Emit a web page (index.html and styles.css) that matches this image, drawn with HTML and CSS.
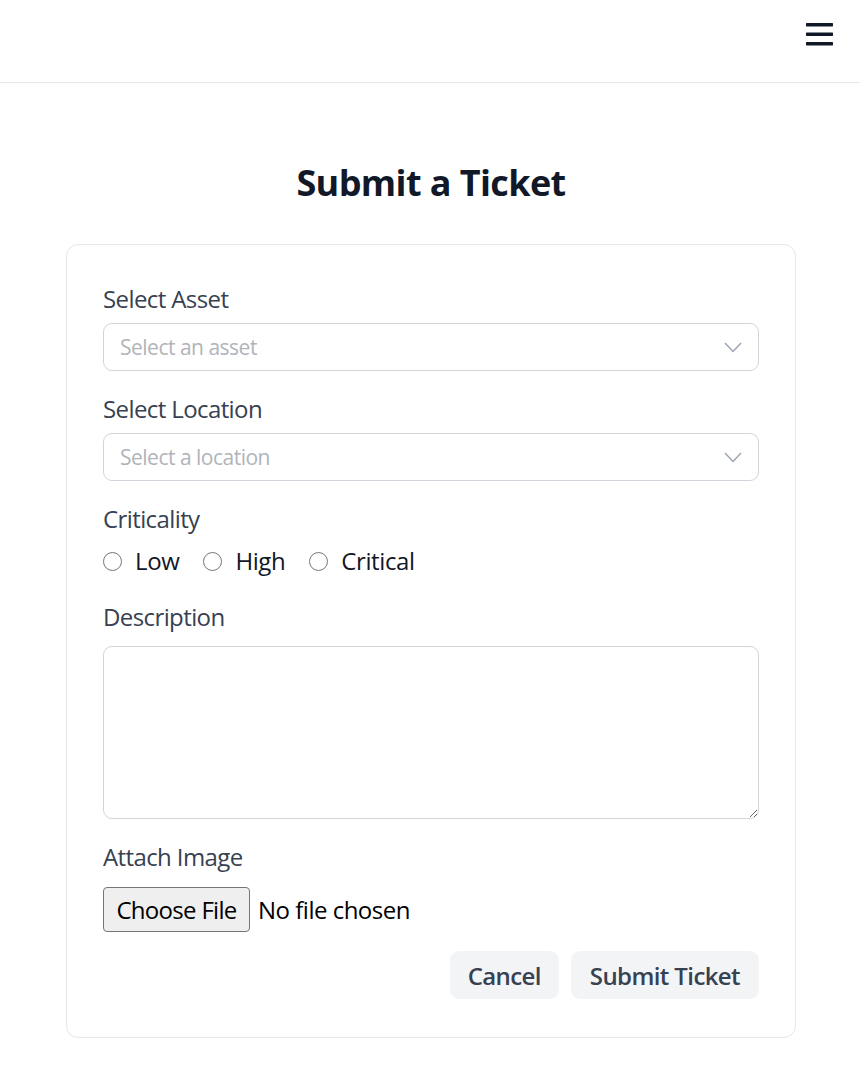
FILE: index.html
```html
<!DOCTYPE html>
<html lang="en">
<head>
<meta charset="utf-8">
<title>Submit a Ticket</title>
<link rel="stylesheet" href="styles.css">
</head>
<body>
<header class="topbar">
  <button class="menu-btn" type="button" aria-label="Open menu">
    <svg width="27" height="23" viewBox="0 0 27 23" aria-hidden="true">
      <rect x="0" y="0" width="27" height="3.4" rx="0.6" fill="#111827"/>
      <rect x="0" y="9.5" width="27" height="3.4" rx="0.6" fill="#111827"/>
      <rect x="0" y="19" width="27" height="3.4" rx="0.6" fill="#111827"/>
    </svg>
  </button>
</header>

<main class="page">
  <h1 class="title">Submit a Ticket</h1>

  <form class="card">
    <div class="field">
      <label class="label">Select Asset</label>
      <div class="select">
        <span class="placeholder">Select an asset</span>
        <svg class="chevron" width="18" height="11" viewBox="0 0 18 11" aria-hidden="true">
          <path d="M1 1 L9 9.5 L17 1" fill="none" stroke="#9ca3af" stroke-width="1.4"/>
        </svg>
      </div>
    </div>

    <div class="field">
      <label class="label">Select Location</label>
      <div class="select">
        <span class="placeholder">Select a location</span>
        <svg class="chevron" width="18" height="11" viewBox="0 0 18 11" aria-hidden="true">
          <path d="M1 1 L9 9.5 L17 1" fill="none" stroke="#9ca3af" stroke-width="1.4"/>
        </svg>
      </div>
    </div>

    <div class="field">
      <span class="label">Criticality</span>
      <div class="radios">
        <label class="radio"><input type="radio" name="crit"><span>Low</span></label>
        <label class="radio"><input type="radio" name="crit"><span>High</span></label>
        <label class="radio"><input type="radio" name="crit"><span>Critical</span></label>
      </div>
    </div>

    <div class="field">
      <label class="label">Description</label>
      <textarea class="textarea"></textarea>
    </div>

    <div class="field">
      <span class="label">Attach Image</span>
      <div class="file">
        <span class="file-btn">Choose File</span>
        <span class="file-name">No file chosen</span>
      </div>
    </div>

    <div class="actions">
      <button type="button" class="btn">Cancel</button>
      <button type="button" class="btn btn-wide">Submit Ticket</button>
    </div>
  </form>
</main>
</body>
</html>
```

FILE: styles.css
```css
* {
  box-sizing: border-box;
}

html, body {
  margin: 0;
  padding: 0;
  background: #ffffff;
}

body {
  font-family: "Open Sans", "Noto Sans", "Liberation Sans", sans-serif;
  color: #111827;
}

.topbar {
  height: 82.5px;
  border-bottom: 1.5px solid #e5e7eb;
  display: flex;
  justify-content: flex-end;
  align-items: flex-start;
  padding: 22.5px 27px 0 0;
}

.menu-btn {
  border: 0;
  background: transparent;
  padding: 0;
  margin: 0;
  display: block;
  line-height: 0;
}

.page {
  padding: 76.5px 0 0 2px;
}

.title {
  margin: 0 0 37px;
  text-align: center;
  font-size: 36px;
  line-height: 48px;
  font-weight: 700;
  letter-spacing: -0.6px;
  color: #111827;
}

.card {
  width: 730px;
  margin: 0 auto;
  border: 1.5px solid #e5e7eb;
  border-radius: 12px;
  padding: 36px 36px 38px;
  display: flex;
  flex-direction: column;
  gap: 20px;
}

.field {
  display: flex;
  flex-direction: column;
}

.label {
  font-size: 24px;
  line-height: 36px;
  color: #374151;
  margin-bottom: 6px;
  letter-spacing: -0.6px;
}

.select {
  position: relative;
  height: 48px;
  border: 1.5px solid #d1d5db;
  border-radius: 9px;
  padding: 0 16px;
  display: flex;
  align-items: center;
}

.placeholder {
  font-size: 21px;
  color: #b0b4ba;
  letter-spacing: -0.5px;
}

.chevron {
  position: absolute;
  right: 16px;
  top: 17.5px;
}

.radios {
  display: flex;
  gap: 24px;
}

.radio {
  display: flex;
  align-items: center;
  gap: 13px;
  font-size: 24px;
  line-height: 36px;
  color: #111827;
  letter-spacing: -0.4px;
}

.radio input {
  appearance: none;
  -webkit-appearance: none;
  width: 19px;
  height: 19px;
  margin: 1px 0 0;
  border: 1.5px solid #767676;
  border-radius: 50%;
  background: #ffffff;
}

.textarea {
  display: block;
  width: 100%;
  height: 173px;
  border: 1.5px solid #d1d5db;
  border-radius: 9px;
  font-family: inherit;
  font-size: 21px;
  padding: 12px 16px;
  resize: both;
  margin: 5px 0 0;
}

.file {
  display: flex;
  align-items: center;
  gap: 8px;
  margin-top: 6px;
}

.file-btn {
  height: 45px;
  width: 147px;
  display: flex;
  align-items: center;
  justify-content: center;
  background: #efefef;
  border: 1.5px solid #767676;
  border-radius: 4px;
  font-size: 24px;
  color: #000000;
  letter-spacing: -0.7px;
}

.file-name {
  font-size: 24px;
  color: #000000;
  letter-spacing: -0.5px;
}

.actions {
  display: flex;
  justify-content: flex-end;
  gap: 12px;
  margin-top: -1px;
}

.btn {
  height: 48px;
  border: 0;
  border-radius: 9px;
  background: #f3f4f6;
  color: #374151;
  font-family: inherit;
  font-size: 24px;
  font-weight: 600;
  letter-spacing: -0.6px;
  padding: 0 18px;
}

.btn-wide {
  padding: 0 19px;
}
```
